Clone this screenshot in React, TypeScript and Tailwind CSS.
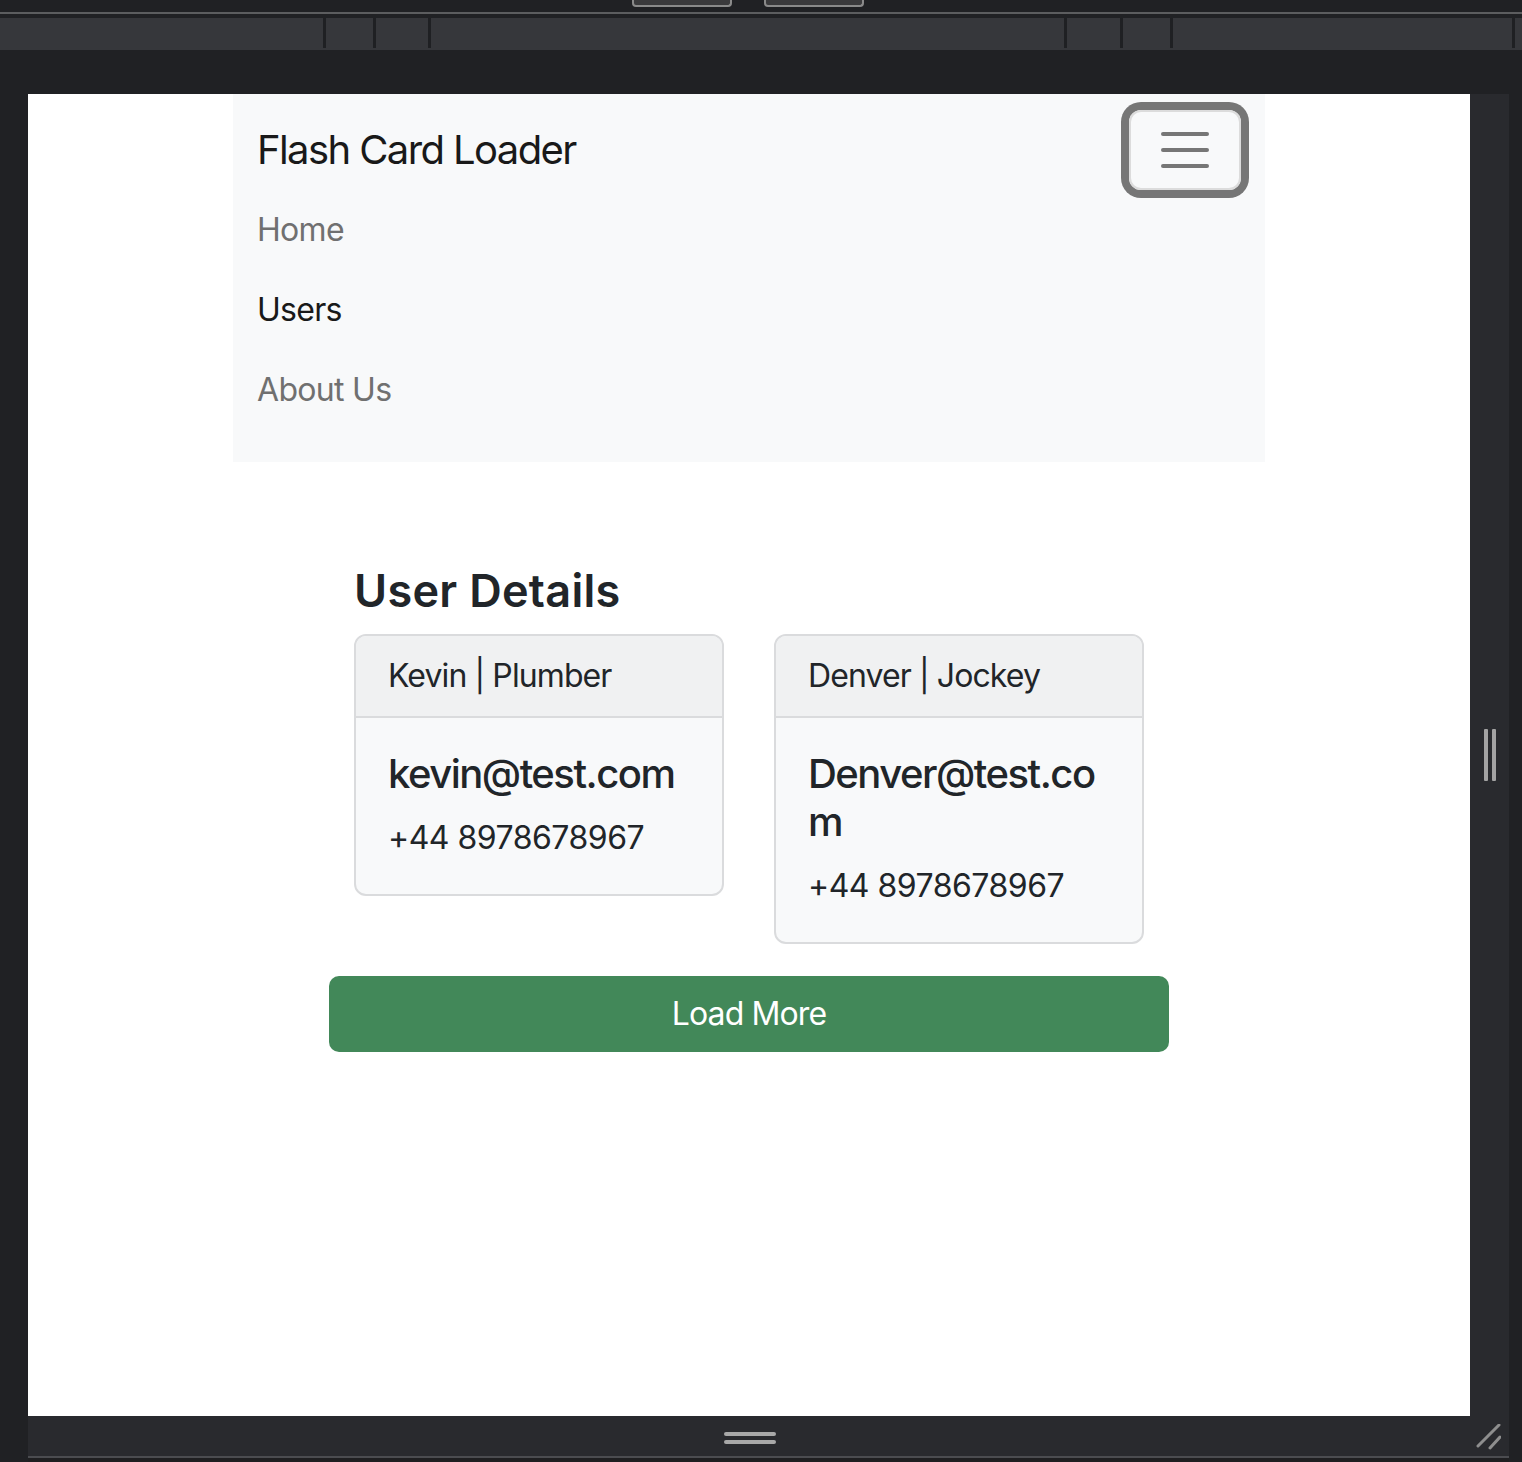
import React from "react";

function Card({ title, email, phone }: { title: string; email: React.ReactNode; phone: string }) {
  return (
    <div className="w-[370px] rounded-[12px] border-2 border-[#dadbdd] bg-[#f8f9fa] overflow-hidden">
      <div className="h-[82px] border-b-2 border-[#dadbdd] bg-[#f0f1f2] px-[32px] py-[16px] text-[32px] leading-[48px] tracking-[-0.9px] text-[#212529]">
        {title}
      </div>
      <div className="p-[32px] text-[#212529]">
        <div className="mb-[16px] text-[40px] leading-[48px] font-medium tracking-[-1.5px]">{email}</div>
        <div className="text-[32px] leading-[48px] tracking-[-0.5px]">{phone}</div>
      </div>
    </div>
  );
}

export default function App() {
  const segs = [323, 47, 52, 633, 53, 47, 339, 7];
  return (
    <div className="w-[1522px] h-[1462px] bg-[#202124] overflow-hidden flex flex-col font-['Inter',sans-serif]">
      {/* top chrome */}
      <div className="h-[50px] flex flex-col shrink-0">
        <div className="h-[12px] flex gap-[32px] pl-[632px]">
          <div className="h-[7px] w-[100px] rounded-b-[4px] border-x-2 border-b-2 border-[#8a8a8a] bg-[#3a3a3c]" />
          <div className="h-[7px] w-[100px] rounded-b-[4px] border-x-2 border-b-2 border-[#8a8a8a] bg-[#3a3a3c]" />
        </div>
        <div className="h-[2px] bg-[#5c5d5f]" />
        <div className="h-[4px]" />
        <div className="h-[32px] flex bg-[#36373b]">
          {segs.map((w, i) => (
            <React.Fragment key={i}>
              {i > 0 && <div className="w-[3px] h-[30px] bg-[#1f2023]" />}
              <div style={{ width: w }} className="h-full" />
            </React.Fragment>
          ))}
        </div>
      </div>
      <div className="flex flex-1">
        <div className="w-[28px] bg-[#202124]" />
        <div className="w-[1481px] flex flex-col">
          <div className="h-[44px] bg-[#202124]" />
          <div className="h-[1322px] flex">
            {/* page */}
            <div className="w-[1442px] h-full bg-white overflow-hidden">
              <nav className="mx-auto w-[1032px] bg-[#f8f9fa] px-[24px] pt-[16px] pb-[32px]">
                <div className="flex items-center justify-between">
                  <div className="py-[10px] text-[40px] leading-[60px] tracking-[-1.6px] text-[#191919]">Flash Card Loader</div>
                  <div className="h-[80px] w-[112px] rounded-[12px] border-2 border-[#dcdcdc] shadow-[0_0_0_8px_#767676] flex flex-col items-center justify-center gap-[12px]">
                    <div className="h-[4px] w-[48px] rounded-full bg-[#767676]" />
                    <div className="h-[4px] w-[48px] rounded-full bg-[#767676]" />
                    <div className="h-[4px] w-[48px] rounded-full bg-[#767676]" />
                  </div>
                </div>
                <ul className="flex flex-col">
                  <li className="py-[16px] text-[32px] leading-[48px] tracking-[-0.7px] text-[#707070]">Home</li>
                  <li className="py-[16px] text-[32px] leading-[48px] tracking-[-0.7px] text-[#191919]">Users</li>
                  <li className="py-[16px] text-[32px] leading-[48px] tracking-[-0.7px] text-[#707070]">About Us</li>
                </ul>
              </nav>
              <div className="mx-auto mt-[102px] w-[790px]">
                <h2 className="mb-[16px] text-[45px] leading-[54px] font-semibold tracking-[0.3px] text-[#212529]">User Details</h2>
                <div className="flex items-start gap-[50px]">
                  <Card title="Kevin | Plumber" email="kevin@test.com" phone="+44 8978678967" />
                  <Card
                    title="Denver | Jockey"
                    email={
                      <>
                        Denver@test.co
                        <br />m
                      </>
                    }
                    phone="+44 8978678967"
                  />
                </div>
              </div>
              <div className="mx-auto mt-[32px] flex h-[76px] w-[840px] items-center justify-center rounded-[10px] bg-[#428859] text-[32px] tracking-[-0.9px] text-white">
                Load More
              </div>
            </div>
            <div className="w-[39px] h-full bg-[#292a2e] flex items-center justify-center gap-[4px]">
              <div className="w-[4px] h-[52px] rounded-[1px] bg-[#a3a3a3]" />
              <div className="w-[4px] h-[52px] rounded-[1px] bg-[#a3a3a3]" />
            </div>
          </div>
          <div className="h-[40px] bg-[#292a2e] flex items-start">
            <div className="ml-[696px] mt-[16px] flex flex-col gap-[4px]">
              <div className="h-[4px] w-[52px] rounded-full bg-[#a8a8a8]" />
              <div className="h-[4px] w-[52px] rounded-full bg-[#a8a8a8]" />
            </div>
            <svg className="ml-auto mr-[8px] mt-[8px]" width="26" height="26" viewBox="0 0 26 26">
              <line x1="3" y1="22" x2="24" y2="1" stroke="#8e8e8e" strokeWidth="3" strokeLinecap="round" />
              <line x1="15" y1="24" x2="25" y2="13" stroke="#8e8e8e" strokeWidth="3" strokeLinecap="round" />
            </svg>
          </div>
          <div className="h-[2px] bg-[#4b4c50]" />
          <div className="flex-1 bg-[#1f1f21]" />
        </div>
        <div className="w-[13px] bg-[#202124]" />
      </div>
    </div>
  );
}
